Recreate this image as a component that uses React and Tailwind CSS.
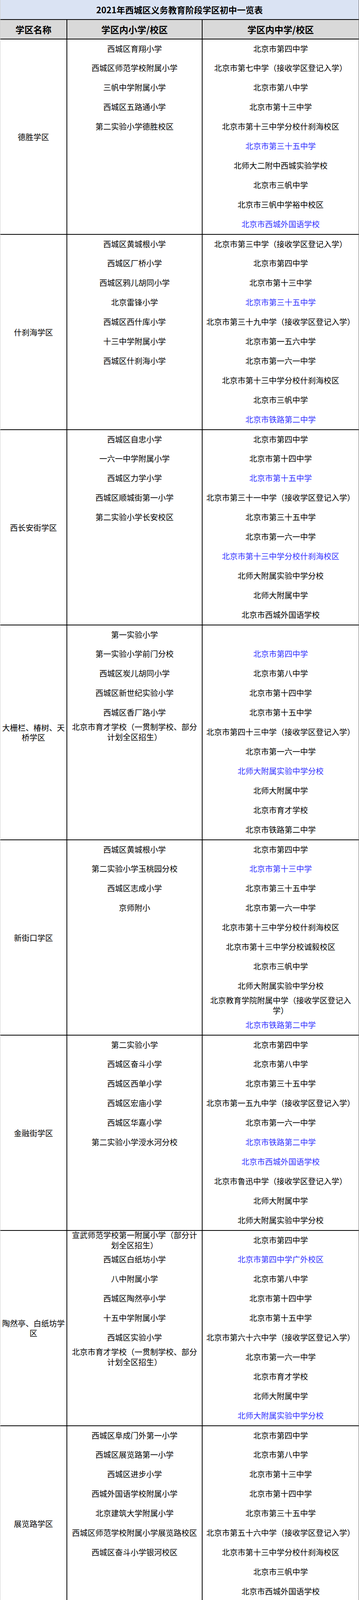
const SECTIONS = [
  {
    name: '德胜学区',
    p: ['西城区育翔小学', '西城区师范学校附属小学', '三帆中学附属小学', '西城区五路通小学', '第二实验小学德胜校区'],
    m: ['北京市第四中学', '北京市第七中学（接收学区登记入学）', '北京市第八中学', '北京市第十三中学', '北京市第十三中学分校什刹海校区', '*北京市第三十五中学', '北师大二附中西城实验学校', '北京市三帆中学', '北京市三帆中学裕中校区', '*北京市西城外国语学校'],
  },
  {
    name: '什刹海学区',
    p: ['西城区黄城根小学', '西城区厂桥小学', '西城区鸦儿胡同小学', '北京雷锋小学', '西城区西什库小学', '十三中学附属小学', '西城区什刹海小学'],
    m: ['北京市第三中学（接收学区登记入学）', '北京市第四中学', '北京市第十三中学', '*北京市第三十五中学', '北京市第三十九中学（接收学区登记入学）', '北京市第一五六中学', '北京市第一六一中学', '北京市第十三中学分校什刹海校区', '北京市三帆中学', '*北京市铁路第二中学'],
  },
  {
    name: '西长安街学区',
    p: ['西城区自忠小学', '一六一中学附属小学', '西城区力学小学', '西城区顺城街第一小学', '第二实验小学长安校区'],
    m: ['北京市第四中学', '北京市第十四中学', '*北京市第十五中学', '北京市第三十一中学（接收学区登记入学）', '北京市第三十五中学', '北京市第一六一中学', '*北京市第十三中学分校什刹海校区', '北师大附属实验中学分校', '北师大附属中学', '北京市西城外国语学校'],
  },
  {
    name: '大栅栏、椿树、天桥学区',
    p: ['第一实验小学', '第一实验小学前门分校', '西城区炭儿胡同小学', '西城区新世纪实验小学', '西城区香厂路小学', '北京市育才学校（一贯制学校、部分计划全区招生）'],
    m: ['', '*北京市第四中学', '北京市第八中学', '北京市第十四中学', '北京市第十五中学', '北京市第四十三中学（接收学区登记入学）', '北京市第一六一中学', '*北师大附属实验中学分校', '北师大附属中学', '北京市育才学校', '北京市铁路第二中学'],
  },
  {
    name: '新街口学区',
    p: ['西城区黄城根小学', '第二实验小学玉桃园分校', '西城区志成小学', '京师附小'],
    m: ['北京市第四中学', '*北京市第十三中学', '北京市第三十五中学', '北京市第一六一中学', '北京市第十三中学分校什刹海校区', '北京市第十三中学分校诚毅校区', '北京市三帆中学', '北师大附属实验中学分校', '北京教育学院附属中学（接收学区登记入学）', '*北京市铁路第二中学'],
  },
  {
    name: '金融街学区',
    p: ['第二实验小学', '西城区奋斗小学', '西城区西单小学', '西城区宏庙小学', '西城区华嘉小学', '第二实验小学涭水河分校'],
    m: ['北京市第四中学', '北京市第八中学', '北京市第三十五中学', '北京市第一五九中学（接收学区登记入学）', '北京市第一六一中学', '*北京市铁路第二中学', '*北京市西城外国语学校', '北京市鲁迅中学（接收学区登记入学）', '北师大附属中学', '北师大附属实验中学分校'],
  },
  {
    name: '陶然亭、白纸坊学区',
    p: ['宣武师范学校第一附属小学（部分计划全区招生）', '西城区白纸坊小学', '八中附属小学', '西城区陶然亭小学', '十五中学附属小学', '西城区实验小学', '北京市育才学校（一贯制学校、部分计划全区招生）'],
    m: ['北京市第四中学', '*北京市第四中学广外校区', '北京市第八中学', '北京市第十四中学', '北京市第十五中学', '北京市第六十六中学（接收学区登记入学）', '北京市第一六一中学', '北京市育才学校', '北师大附属中学', '*北师大附属实验中学分校'],
  },
  {
    name: '展览路学区',
    p: ['西城区阜成门外第一小学', '西城区展览路第一小学', '西城区进步小学', '西城外国语学校附属小学', '北京建筑大学附属小学', '西城区师范学校附属小学展览路校区', '西城区奋斗小学银河校区'],
    m: ['北京市第四中学', '北京市第八中学', '北京市第十三中学', '北京市第十四中学', '北京市第三十五中学', '北京市第五十六中学（接收学区登记入学）', '北京市第十三中学分校什刹海校区', '北京市三帆中学', '北京市西城外国语学校', '北京市铁路第二中学'],
  },
  {
    name: '月坛学区',
    p: ['第二实验小学白云路分校', '西城区育民小学', '西城区中古友谊小学', '西城区三里河第三小学', '西城区复兴门外第一小学'],
    m: ['*北京市第四中学', '北京市第八中学', '北京市第三十五中学', '北京市第四十四中学（接收学区登记入学）', '北京市第一六一中学', '北京市第一六一中学分校（接收学区登记入学）', '北师大附属实验中学分校', '北京市西城外国语学校', '北京市铁路第二中学', '*北师大附属中学'],
  },
  {
    name: '广安门内、牛街学区',
    p: ['西城区康乐里小学', '北京小学广内分校', '宣武回民小学', '西城区登莱小学'],
    m: ['*北京市第四中学', '北京市第四中学广外校区', '北京市第八中学', '北京市第十四中学', '北京市第十五中学', '北京市第六十六中学', '*北京市第一六一中学', '北师大附属实验中学分校', '北师大附属中学', '北京市回民学校（接收学区登记入学）'],
  },
  {
    name: '广安门外学区',
    p: ['第二实验小学广外分校', '北京小学天宁寺分校', '北京小学红山分校', '西城区青年湖小学', '西城区椿树馆小学', '西城区三义里小学', '第一实验小学红莲分校（部分计划全区招生）', '北京小学广外校区', '第一实验小学广外校区'],
    m: ['北京市第四中学广外校区', '北京市第八中学', '北京市第十四中学', '北京市第十五中学', '*北京市第一六一中学', '北师大附属实验中学分校', '北京市西城外国语学校', '北京市铁路第二中学', '北京市宣武外国语实验学校（接收学区登记入学）', '*北师大附属中学'],
  },
  {
    name: '全区招生学校',
    p: ['北京小学（寄宿）', '西城区育翔小学分校', '西城区黄城根小学分校', '西城区京华实验学校（一贯制学校）', '北京市铁路第二中学（一贯制学校）', '北京市第十四中学（一贯制学校）'],
    m: ['北师大实验华夏女子中学（特色学校入学）', '北京市月坛中学（特色学校入学）', '北京市徐悲鸿中学（特色学校入学）', '北京市西城区德胜中学（全区派位入学）'],
  },
  {
    name: '民办学校',
    p: ['北京市正泽学校（一贯制学校）', '北师大亚太实验学校（一贯制学校）'],
    m: ['北师大亚太实验学校', '*北京市正泽学校'],
  },
];

function Cell({ text }) {
  const blue = text.startsWith('*');
  const t = blue ? text.slice(1) : text;
  return (
    <div
      className={
        blue
          ? 'h-[50px] first:h-[48px] flex items-center justify-center text-center leading-[26px] text-[#3333ff]'
          : 'h-[50px] first:h-[48px] flex items-center justify-center text-center leading-[26px] text-black'
      }
    >
      <span>{t}</span>
    </div>
  );
}

function Section({ s }) {
  return (
    <div className="flex border-t-2 border-black">
      <div className="w-[169px] shrink-0 flex items-center justify-center text-center px-[2px] leading-[25px] text-black">
        <span>{s.name}</span>
      </div>
      <div className="w-[346px] shrink-0 border-l-2 border-black px-2 flex flex-col">
        {s.p.map((t, i) => (
          <Cell key={i} text={t} />
        ))}
      </div>
      <div className="flex-1 min-w-0 border-l-2 border-black px-[6px] flex flex-col">
        {s.m.map((t, i) => (
          <Cell key={i} text={t} />
        ))}
      </div>
    </div>
  );
}

export default function App() {
  return (
    <div
      className="w-full bg-white text-[20px] border-l border-r border-l-[#cfcfcf] border-r-[#6f6f6f] border-b-2 border-b-black"
      style={{ fontFamily: '"Noto Sans CJK SC", "Noto Sans", sans-serif' }}
    >
      <div className="h-[49px] bg-[#dae3f3] flex items-center justify-center text-[22px] font-bold text-black">
        2021年西城区义务教育阶段学区初中一览表
      </div>
      <div className="h-[50px] flex border-t-2 border-black bg-[#d9d9d9] text-[23px] font-bold text-black">
        <div className="w-[169px] shrink-0 flex items-center justify-center">学区名称</div>
        <div className="w-[346px] shrink-0 border-l-2 border-black flex items-center justify-center">学区内小学/校区</div>
        <div className="flex-1 border-l-2 border-black flex items-center justify-center">学区内中学/校区</div>
      </div>
      {SECTIONS.map((s, i) => (
        <Section key={i} s={s} />
      ))}
    </div>
  );
}
